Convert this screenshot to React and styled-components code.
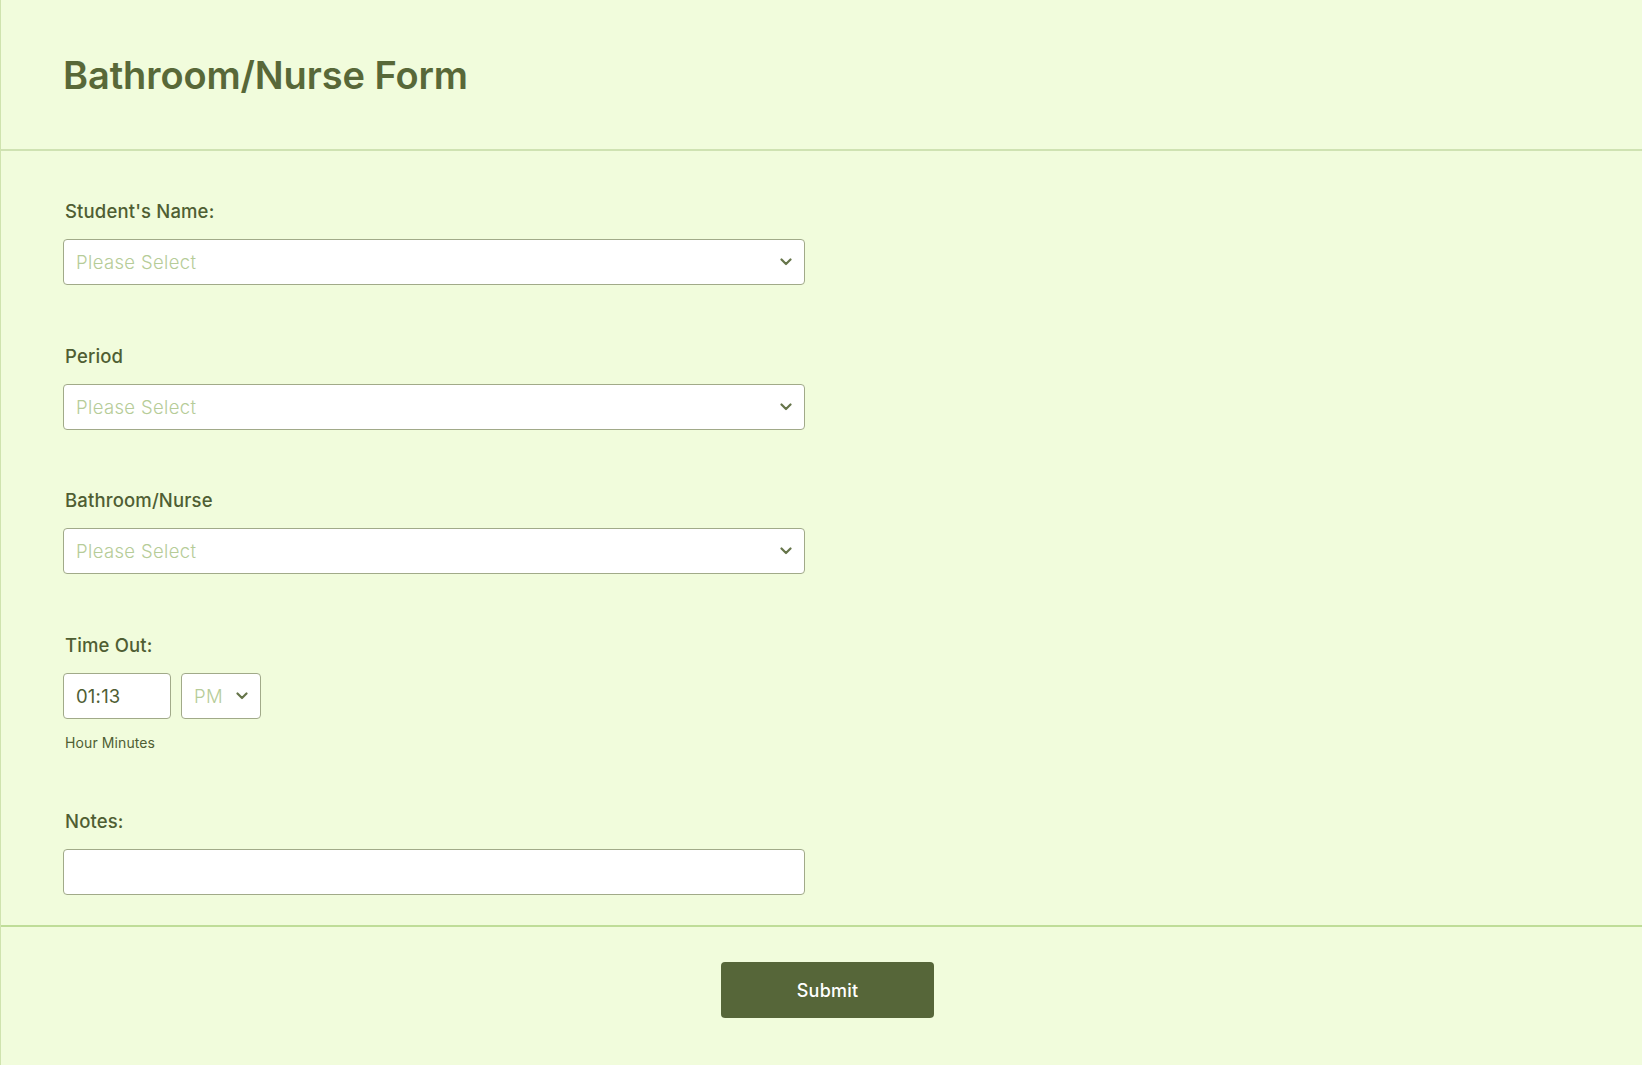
import React from 'react';
import styled, {createGlobalStyle} from 'styled-components';

const GlobalStyle = createGlobalStyle`
  body {
    margin: 0;
    background-color: #f1fcdc;
    font-family: Inter, "Noto Sans", sans-serif;
  }
`;

const Page = styled.div`
  min-height: 100vh;
  border-left: 1px solid #cfe3ae;
  display: flex;
  flex-direction: column;
`;

const Header = styled.header`
  height: 148px;
  padding: 1px 62px 0;
  display: flex;
  align-items: center;
  border-bottom: 2px solid #cfe2b2;
`;

const Title = styled.h1`
  margin: 0;
  font-size: 38px;
  font-weight: 600;
  color: #586838;
  letter-spacing: -0.1px;
`;

const FormBody = styled.div`
  padding: 49px 62px 30px;
  display: flex;
  flex-direction: column;
  gap: 59.5px;
`;

const Field = styled.div`
  display: flex;
  flex-direction: column;
`;

const Label = styled.label`
  font-size: 18.5px;
  line-height: 22px;
  font-weight: 450;
  letter-spacing: 0.15px;
  color: #4f5e33;
  padding-left: 2px;
  margin-bottom: 17px;
`;

const Box = styled.div`
  box-sizing: border-box;
  width: ${props => props.width || '742px'};
  height: 46px;
  background: #fff;
  border: 1px solid #a1aa89;
  border-radius: 4px;
  display: flex;
  align-items: center;
  justify-content: space-between;
  padding: 0 12px 0 12px;
  font-size: 18.5px;
  letter-spacing: ${props => props.placeholder ? '0.35px' : '0.2px'};
  font-weight: ${props => props.placeholder ? 300 : 400};
  color: ${props => props.placeholder ? '#b6cc98' : '#4f5e33'};
`;

const Row = styled.div`
  display: flex;
  gap: 10px;
`;

const Sub = styled.div`
  margin-top: 15px;
  padding-left: 2px;
  font-size: 14px;
  line-height: 17px;
  letter-spacing: 0.1px;
  color: #4f5e33;
`;

const Footer = styled.footer`
  flex: 1;
  border-top: 2px solid #bfdd98;
  display: flex;
  justify-content: center;
  align-items: flex-start;
  padding: 35px 0 40px 12px;
`;

const SubmitButton = styled.button`
  width: 213px;
  height: 56px;
  border: none;
  border-radius: 4px;
  background: #566639;
  color: #fff;
  font-family: Inter, sans-serif;
  font-size: 18px;
  font-weight: 450;
  letter-spacing: 0.2px;
  cursor: pointer;
`;

const Chevron = () => (
  <svg width="12" height="8" viewBox="0 0 12 8">
    <path d="M1.5 1.5 L6 6 L10.5 1.5" fill="none" stroke="#66754a" strokeWidth="2.2" strokeLinecap="round" strokeLinejoin="round"/>
  </svg>
);

const SelectField = ({label}) => (
  <Field>
    <Label>{label}</Label>
    <Box placeholder="1">
      Please Select
      <Chevron/>
    </Box>
  </Field>
);

export default function App() {
  return (
    <Page>
      <GlobalStyle/>
      <Header>
        <Title>Bathroom/Nurse Form</Title>
      </Header>
      <FormBody>
        <SelectField label="Student's Name:"/>
        <SelectField label="Period"/>
        <SelectField label="Bathroom/Nurse"/>
        <Field>
          <Label>Time Out:</Label>
          <Row>
            <Box width="108px">01:13</Box>
            <Box width="80px" placeholder="1">
              PM
              <Chevron/>
            </Box>
          </Row>
          <Sub>Hour Minutes</Sub>
        </Field>
        <Field>
          <Label>Notes:</Label>
          <Box/>
        </Field>
      </FormBody>
      <Footer>
        <SubmitButton type="submit">Submit</SubmitButton>
      </Footer>
    </Page>
  );
}
